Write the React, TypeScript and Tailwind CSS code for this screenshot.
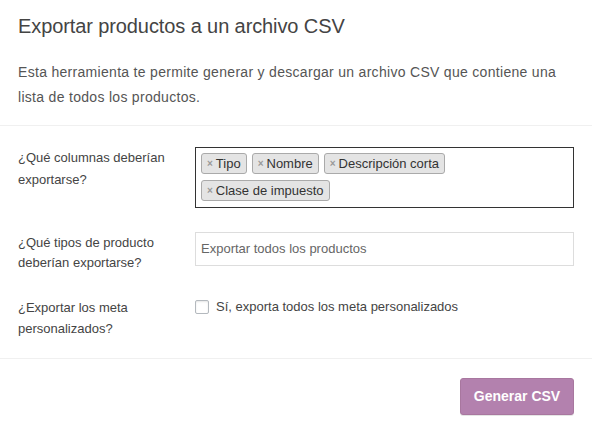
import React from "react";

function Tag({ label }: { label: string }) {
  return (
    <span className="inline-flex items-center h-[21px] pl-[5px] pr-[5px] mr-[5px] mb-[6px] rounded-[3px] border border-[#aaaaaa] bg-[#e4e4e4] text-[13px] leading-none text-[#333]">
      <span className="text-[10px] text-[#999] mr-[3px] font-bold">×</span>
      {label}
    </span>
  );
}

export default function App() {
  return (
    <div className="w-[592px] h-[432px] bg-white text-[#555] overflow-hidden" style={{ fontFamily: '"Liberation Sans", Arial, sans-serif' }}>
      <div className="px-[18px] pt-[13px] pb-[15px] border-b border-[#f0f0f0]">
        <h1 className="text-[20px] leading-[26px] text-[#444] m-0 tracking-[-0.1px]">Exportar productos a un archivo CSV</h1>
        <p className="mt-[21px] w-[548px] text-[14px] leading-[25px] text-[#555] tracking-[0.3px]">
          Esta herramienta te permite generar y descargar un archivo CSV que contiene una lista de todos los productos.
        </p>
      </div>
      <div className="px-[18px] pt-[21px] pb-[19px] border-b border-[#f0f0f0] flex flex-col gap-[24px]">
        <div className="flex">
          <div className="w-[177px] text-[13px] leading-[22px] text-[#444]">¿Qué columnas deberían exportarse?</div>
          <div className="flex-1 border border-[#333] pl-[5px] pr-[5px] pt-[5px] pb-0 flex flex-wrap content-start h-[61px]">
            <Tag label="Tipo" />
            <Tag label="Nombre" />
            <Tag label="Descripción corta" />
            <Tag label="Clase de impuesto" />
          </div>
        </div>
        <div className="flex">
          <div className="w-[177px] pt-[1px] text-[13px] leading-[20px] text-[#444]">¿Qué tipos de producto deberían exportarse?</div>
          <div className="flex-1 h-[34px] border border-[#ddd] flex items-center px-[5px] text-[13px] text-[#666]">
            Exportar todos los productos
          </div>
        </div>
        <div className="flex">
          <div className="w-[177px] text-[13px] leading-[21px] text-[#444]">¿Exportar los meta personalizados?</div>
          <div className="flex-1 flex items-start pt-[3px]">
            <span className="w-[14px] h-[14px] border border-[#b4b9be] rounded-[2px] bg-white shadow-[inset_0_1px_2px_rgba(0,0,0,0.1)]" />
            <span className="ml-[7px] text-[13px] leading-[14px] text-[#444]">Sí, exporta todos los meta personalizados</span>
          </div>
        </div>
      </div>
      <div className="px-[18px] pt-[19px] flex justify-end">
        <button className="h-[37px] w-[114px] rounded-[3px] bg-[#b381ae] border border-[#a8779f] text-white text-[14px] font-bold shadow-[0_1px_0_rgba(0,0,0,0.1)]">
          Generar CSV
        </button>
      </div>
    </div>
  );
}
